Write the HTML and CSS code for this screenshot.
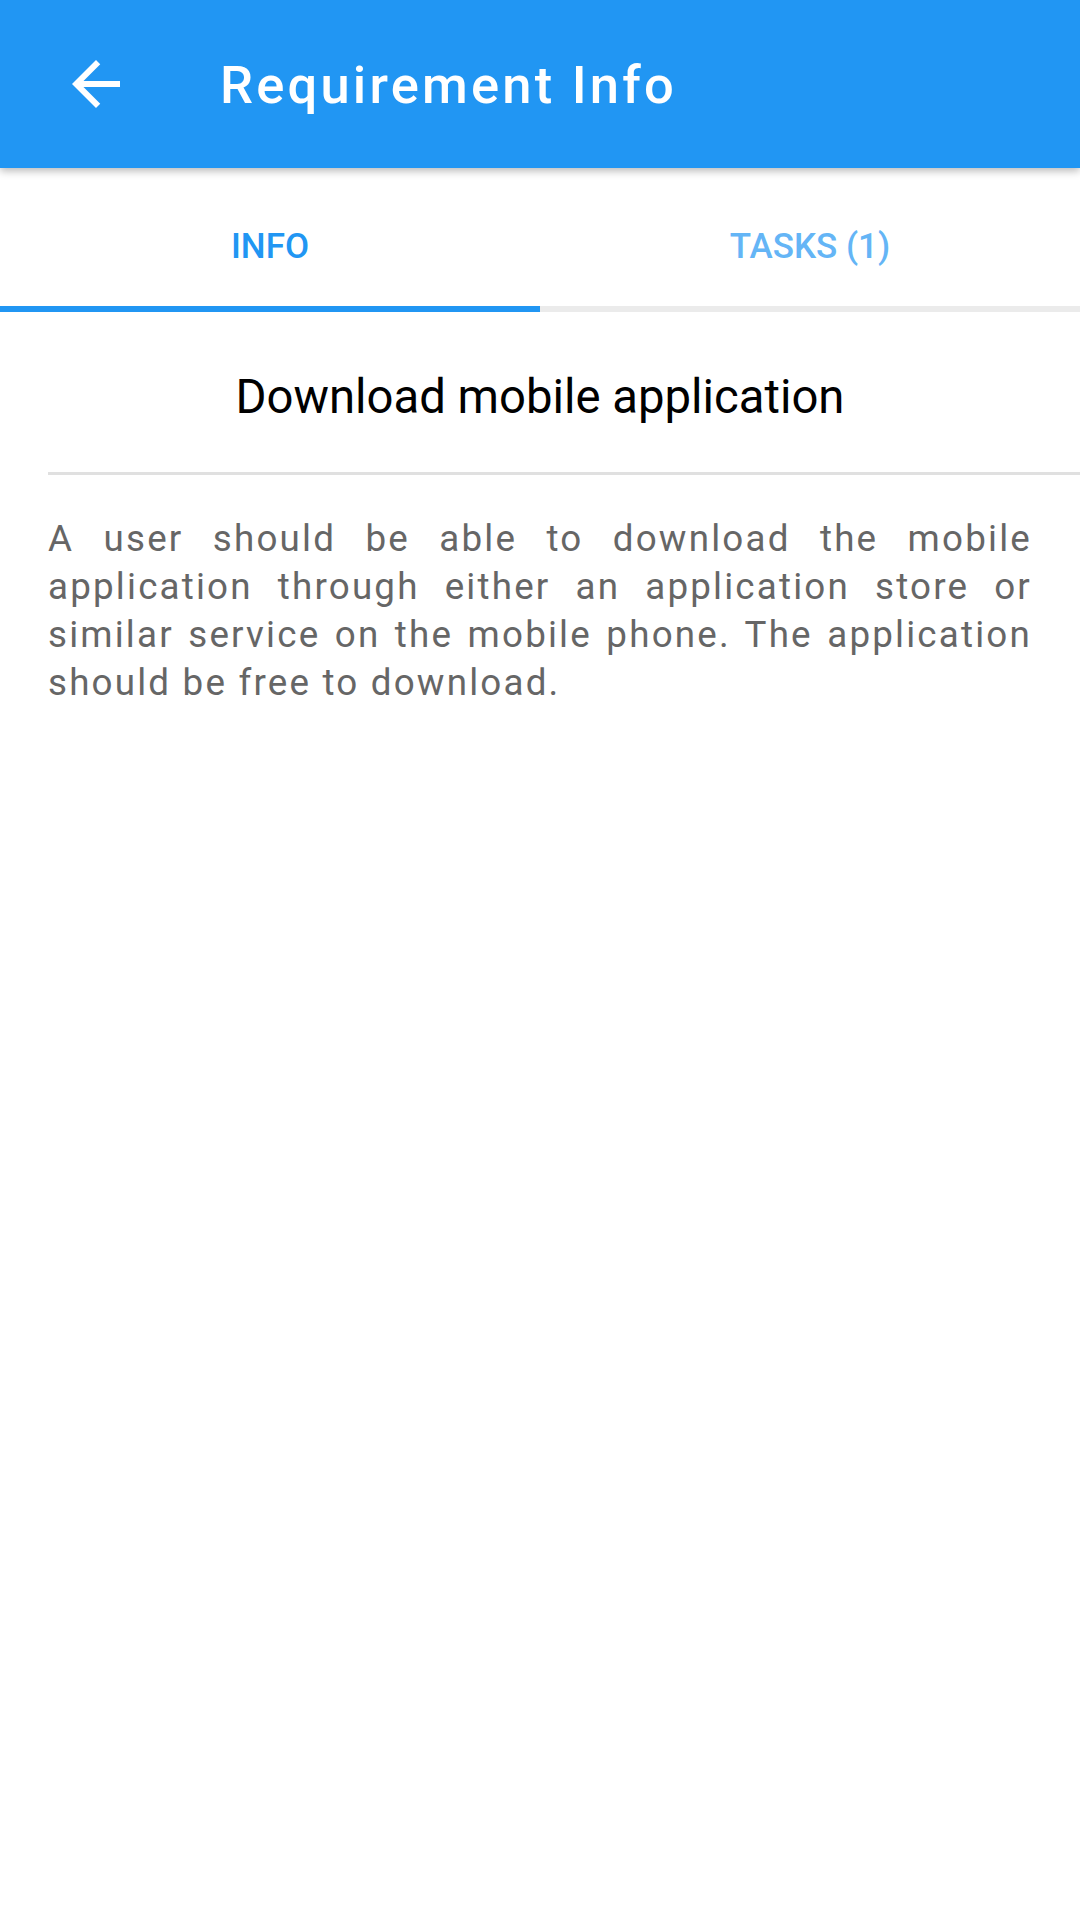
FILE: index.html
```html
<!DOCTYPE html>
<html>
<head>
<meta charset="utf-8">
<link rel="stylesheet" href="styles.css">
</head>
<body>
<header class="appbar">
  <div class="nav-icon">
    <svg viewBox="0 0 24 24" width="72" height="72"><path fill="#ffffff" d="M20 11H7.83l5.59-5.59L12 4l-8 8 8 8 1.41-1.41L7.83 13H20v-2z"/></svg>
  </div>
  <h1 class="title">Requirement Info</h1>
</header>
<nav class="tabs">
  <div class="tab active">INFO</div>
  <div class="tab">TASKS (1)</div>
</nav>
<main class="content">
  <h2 class="req-title">Download mobile application</h2>
  <div class="divider"></div>
  <p class="req-desc">A user should be able to download the mobile application through either an application store or similar service on the mobile phone. The application should be free to download.</p>
</main>
</body>
</html>
```
FILE: styles.css
```css
html, body {
  margin: 0;
  padding: 0;
  background: #ffffff;
  font-family: Roboto, "Noto Sans", Arial, sans-serif;
}
.appbar {
  position: relative;
  z-index: 2;
  height: 168px;
  background: #2196F3;
  display: flex;
  align-items: center;
  box-shadow: 0 3px 8px rgba(0,0,0,0.28);
}
.nav-icon {
  width: 72px;
  height: 72px;
  margin-left: 60px;
  display: flex;
}
.title {
  margin: 0 0 0 88px;
  padding-top: 2px;
  font-size: 52.5px;
  font-weight: 500;
  line-height: 1;
  letter-spacing: 3.2px;
  color: #ffffff;
}
.tabs {
  display: flex;
  height: 144px;
}
.tab {
  flex: 1;
  box-sizing: border-box;
  text-align: center;
  padding-top: 61px;
  font-size: 35px;
  font-weight: 500;
  line-height: 1;
  color: #64B5F6;
  border-bottom: 6px solid #EBEBEB;
}
.tab.active {
  color: #2196F3;
  border-bottom-color: #2196F3;
}
.content {
  padding: 0 48px;
}
.req-title {
  margin: 57px 0 0;
  font-size: 47.25px;
  font-weight: 400;
  line-height: 56px;
  color: #000000;
  text-align: center;
}
.divider {
  margin: 47px -48px 0 0;
  height: 3px;
  background: #E0E0E0;
}
.req-desc {
  margin: 40px 0 0;
  font-size: 36.75px;
  line-height: 48px;
  letter-spacing: 2.2px;
  color: #666666;
  text-align: justify;
}
```
